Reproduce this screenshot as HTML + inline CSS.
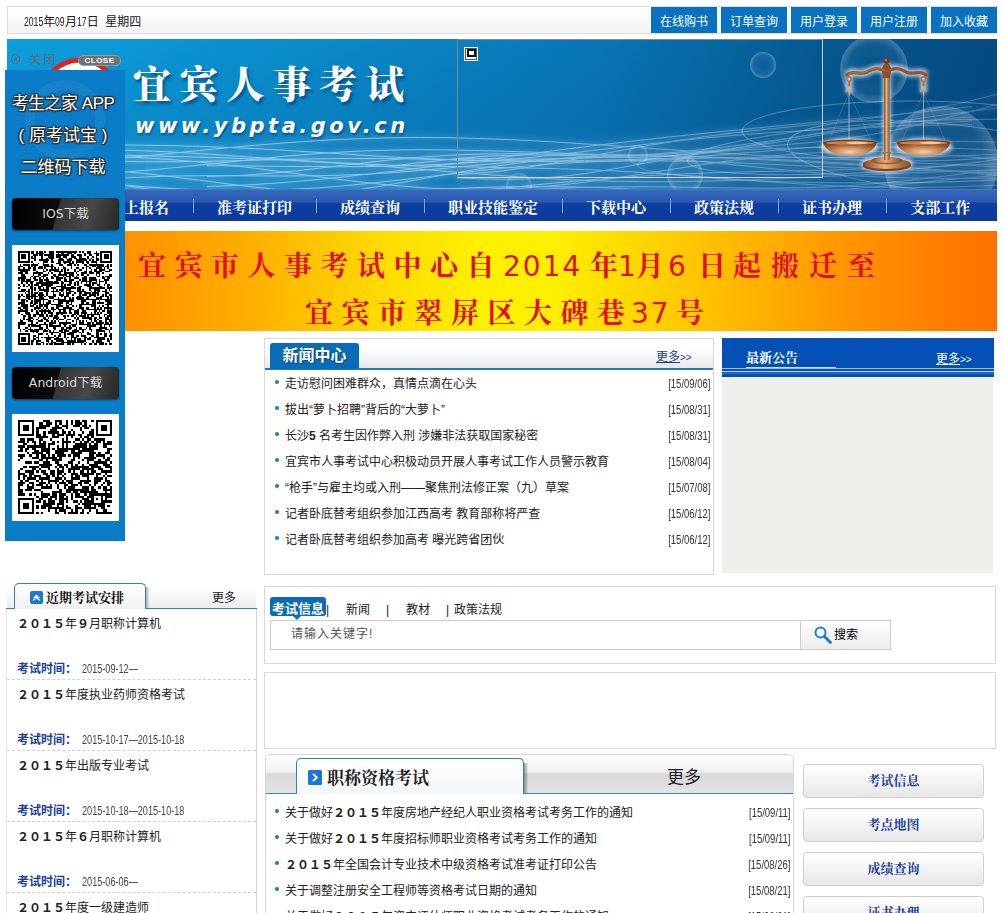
<!DOCTYPE html>
<html lang="zh-CN">
<head>
<meta charset="utf-8">
<title>宜宾人事考试</title>
<style>
*{box-sizing:border-box;margin:0;padding:0}
html,body{width:1004px;height:913px;overflow:hidden;background:#fff}
body{position:relative;font-family:"Liberation Sans","Noto Sans CJK SC",sans-serif;font-size:12px;color:#222}
.abs{position:absolute}
.serif{font-family:"Liberation Serif","Noto Serif CJK SC",serif}
.nar2{display:inline-block;transform:scaleX(.72);transform-origin:0 50%;margin-right:-3.7px}
.nar2.n4{margin-right:-7.4px}
.nar{font-family:"Liberation Sans",sans-serif;letter-spacing:-1px}
a{color:inherit;text-decoration:none}
/* top bar */
#topbar{left:7px;top:6px;width:990px;height:28px;border:1px solid #dcdcdc;background:linear-gradient(#fff,#f3f3f3)}
#date{left:24px;top:15px;font-size:12px;line-height:14px;color:#222;white-space:nowrap}
.tbtn{top:7px;width:66px;height:26px;background:#0871c0;color:#fff;font-size:12px;line-height:30px;text-align:center;white-space:nowrap;overflow:hidden}
/* banner */
#banner{left:7px;top:39px;width:990px;height:150px;overflow:hidden;background:#0878b8}
#nav{left:7px;top:189px;width:990px;height:32px;background:linear-gradient(#4a7ac8 0,#3565bb 2px,#2a58b0 40%,#0f40a0 46%,#0a3a9c 100%);white-space:nowrap;overflow:hidden}
#nav span{display:inline-block;height:32px;line-height:38px;padding:0 24px;font-size:15px;font-weight:bold;color:#fff;position:relative;vertical-align:top}
#nav span+span:before{content:"";position:absolute;left:0;top:10px;width:1px;height:14px;background:#7fa6e0}
#orange{left:7px;top:231px;width:990px;height:100px;background:linear-gradient(90deg,#ff8600 0,#ff8c00 10%,#ffb000 25%,#ffdc00 38%,#fff000 48%,#fff000 55%,#ffc400 70%,#ff9400 85%,#ff7000 100%)}
.ol{color:#e0102c;font-size:28px;letter-spacing:8.5px;white-space:nowrap;font-weight:700;margin-top:1px;line-height:36px}
.dg{font-family:"DejaVu Sans","Liberation Sans",sans-serif;font-weight:normal;letter-spacing:2px;font-size:28px}

.box{border:1px solid #d8d8d8;background:#fff}
.more{font-size:12px;line-height:14px;white-space:nowrap}
.gt{font-size:10px}
.nl{list-style:none}
.nl li{position:relative;height:26px;line-height:26px;padding-top:1px;padding-left:20px;font-size:12px;color:#222;white-space:nowrap}
.nl li i{position:absolute;left:10px;top:10px;width:4px;height:4px;border-radius:2px;background:#1a78d0}
.nl li b{position:absolute;right:3px;top:1px;font-weight:normal;color:#333;letter-spacing:0;transform:scaleX(.79);transform-origin:100% 50%}
.ex{left:7px;width:249px;height:71px;border-bottom:1px dashed #d0d0d0}
.ex p{position:absolute;left:10px;top:8px;font-size:12px;line-height:15px;color:#222;white-space:nowrap}
.ex em{position:absolute;left:10px;top:53px;font-style:normal;font-size:12px;line-height:15px;color:#333;white-space:nowrap}
.ex em b{color:#1c3f9c}
.ex em span{display:inline-block;letter-spacing:0;color:#444;margin-left:5px;transform:scaleX(.76);transform-origin:0 50%}
.stab{top:603px;font-size:12px;line-height:14px;color:#222;white-space:nowrap}
.rb{left:803px;width:181px;height:34px;border:1px solid #cfcfcf;border-radius:4px;background:linear-gradient(#fff 0,#f4f4f4 50%,#e6e6e6 100%);font-size:13px;line-height:32px;font-weight:bold;color:#1c3f9c;text-align:center}

.fl{left:3px;width:120px;text-align:center;font-size:17px;line-height:22px;color:#fff;white-space:nowrap;letter-spacing:0;text-shadow:0 0 2px #222,1px 1px 1px #222,-1px -1px 1px #333,1px -1px 1px #333,-1px 1px 1px #333}
.fbtn{left:12px;width:107px;height:32px;border-radius:4px;background:linear-gradient(105deg,#000 0,#0c0c0c 42%,#363636 43%,#484848 70%,#262626 100%);box-shadow:0 1px 2px rgba(0,0,0,.5);color:#d8d8d8;font-size:12.5px;line-height:32px;text-align:center;white-space:nowrap;font-family:'DejaVu Sans','Noto Sans CJK SC',sans-serif}
</style>
</head>
<body>
<!-- top bar -->
<div class="abs" id="topbar"></div>
<div class="abs" id="date"><span class="nar2 n4">2015</span>年<span class="nar2">09</span>月<span class="nar2">17</span>日&nbsp; 星期四</div>
<a class="abs tbtn" style="left:651px">在线购书</a>
<a class="abs tbtn" style="left:721px">订单查询</a>
<a class="abs tbtn" style="left:791px">用户登录</a>
<a class="abs tbtn" style="left:861px">用户注册</a>
<a class="abs tbtn" style="left:931px">加入收藏</a>

<!-- banner -->
<div class="abs" id="banner"><!--BANNER_START-->
<svg class="abs" style="left:0;top:0" width="990" height="150" viewBox="0 0 990 150">
<defs>
<linearGradient id="bg" x1="0" x2="1" y1="0" y2="0"><stop offset="0" stop-color="#0da0de"/><stop offset=".3" stop-color="#0a8ccc"/><stop offset=".6" stop-color="#0876b6"/><stop offset=".83" stop-color="#05588f"/><stop offset="1" stop-color="#044a82"/></linearGradient>
<linearGradient id="bgv" x1="0" x2="0" y1="0" y2="1"><stop offset="0" stop-color="#003060" stop-opacity="0"/><stop offset="1" stop-color="#0a4a90" stop-opacity=".25"/></linearGradient>
<radialGradient id="bub" cx=".5" cy=".5" r=".5"><stop offset="0" stop-color="#fff" stop-opacity="0"/><stop offset=".75" stop-color="#fff" stop-opacity=".08"/><stop offset="1" stop-color="#fff" stop-opacity=".35"/></radialGradient>
<linearGradient id="cop" x1="0" x2="1" y1="0" y2="0"><stop offset="0" stop-color="#8a4a22"/><stop offset=".45" stop-color="#e8b07a"/><stop offset="1" stop-color="#8a4a22"/></linearGradient>
<linearGradient id="pan" x1="0" x2="0" y1="0" y2="1"><stop offset="0" stop-color="#a86436"/><stop offset=".5" stop-color="#e0a874"/><stop offset="1" stop-color="#7a3e1c"/></linearGradient>
<radialGradient id="pan2" cx=".5" cy=".75" r=".6"><stop offset="0" stop-color="#f4cfa4"/><stop offset=".45" stop-color="#d09060"/><stop offset="1" stop-color="#8c4a22"/></radialGradient><filter id="glow" x="-20%" y="-20%" width="140%" height="140%"><feGaussianBlur stdDeviation="2.2"/></filter>
</defs>
<rect width="990" height="150" fill="url(#bg)"/>
<rect width="990" height="150" fill="url(#bgv)"/>
<!-- waves -->
<defs><linearGradient id="fg" x1="0" x2="1" y1="0" y2="0"><stop offset="0" stop-color="#fff"/><stop offset=".45" stop-color="#fff"/><stop offset=".8" stop-color="#999"/><stop offset="1" stop-color="#777"/></linearGradient><mask id="fade" maskUnits="userSpaceOnUse" x="0" y="0" width="990" height="150"><rect width="990" height="150" fill="url(#fg)"/></mask><filter id="wb" x="-5%" y="-50%" width="110%" height="200%"><feGaussianBlur stdDeviation="3"/></filter>
<linearGradient id="haze" x1="0" x2="0" y1="0" y2="1"><stop offset="0" stop-color="#bfe6ff" stop-opacity="0"/><stop offset=".55" stop-color="#bfe6ff" stop-opacity=".08"/><stop offset="1" stop-color="#bfe6ff" stop-opacity=".05"/></linearGradient></defs>
<rect x="0" y="88" width="990" height="62" fill="url(#haze)"/>
<g fill="none" stroke="#dff2ff" stroke-width="3" opacity=".22" filter="url(#wb)" mask="url(#fade)">
<path d="M0 151.1C9 149.9 37 146.3 55 144.4C73 142.4 92 140.7 110 139.4C128 138.2 147 137.5 165 137.0C183 136.6 202 136.7 220 136.7C238 136.7 257 137.0 275 137.0C293 136.9 312 136.9 330 136.3C348 135.8 367 134.9 385 133.7C403 132.5 422 130.7 440 129.1C458 127.5 477 125.4 495 123.9C513 122.3 532 120.7 550 119.7C568 118.8 587 118.2 605 118.2C623 118.3 642 119.0 660 120.0C678 121.1 697 122.9 715 124.6C733 126.3 752 128.4 770 130.2C788 132.0 807 133.9 825 135.2C843 136.6 862 137.6 880 138.3C898 139.0 917 139.2 935 139.3C953 139.5 981 139.2 990 139.2"/>
<path d="M0 116.5C9 117.1 37 119.3 55 120.2C73 121.2 92 122.0 110 122.4C128 122.8 147 122.9 165 122.8C183 122.7 202 122.3 220 121.9C238 121.5 257 120.9 275 120.5C293 120.1 312 119.7 330 119.6C348 119.4 367 119.5 385 119.6C403 119.8 422 120.2 440 120.6C458 121.0 477 121.6 495 121.9C513 122.3 532 122.7 550 122.7C568 122.7 587 122.6 605 122.1C623 121.6 642 120.8 660 119.7C678 118.7 697 117.3 715 115.8C733 114.4 752 112.7 770 111.2C788 109.7 807 108.1 825 106.9C843 105.6 862 104.5 880 103.8C898 103.1 917 102.7 935 102.6C953 102.4 981 102.9 990 103.0"/>
<path d="M0 135.6C9 136.4 37 138.9 55 140.5C73 142.2 92 144.0 110 145.5C128 147.0 147 148.6 165 149.6C183 150.6 202 151.3 220 151.6C238 151.8 257 151.5 275 150.8C293 150.2 312 148.9 330 147.4C348 145.9 367 143.9 385 141.9C403 139.9 422 137.5 440 135.4C458 133.3 477 131.1 495 129.3C513 127.5 532 125.8 550 124.6C568 123.5 587 122.6 605 122.2C623 121.7 642 121.7 660 121.9C678 122.1 697 122.7 715 123.3C733 123.9 752 124.8 770 125.6C788 126.4 807 127.3 825 128.1C843 128.8 862 129.6 880 130.2C898 130.9 917 131.4 935 132.0C953 132.6 981 133.5 990 133.8"/>
<path d="M0 117.8C9 117.7 37 116.9 55 116.9C73 116.9 92 117.1 110 117.7C128 118.3 147 119.3 165 120.7C183 122.1 202 123.9 220 125.9C238 127.9 257 130.4 275 132.8C293 135.1 312 137.8 330 140.1C348 142.3 367 144.6 385 146.3C403 147.9 422 149.3 440 149.9C458 150.5 477 150.6 495 150.0C513 149.4 532 148.0 550 146.2C568 144.5 587 142.0 605 139.5C623 136.9 642 133.8 660 131.1C678 128.3 697 125.3 715 122.8C733 120.4 752 118.1 770 116.5C788 114.8 807 113.6 825 113.1C843 112.5 862 112.5 880 113.0C898 113.4 917 114.5 935 115.7C953 117.0 981 119.6 990 120.4"/>
<path d="M0 112.4C9 112.1 37 111.0 55 110.8C73 110.5 92 110.6 110 111.0C128 111.3 147 112.1 165 113.0C183 114.0 202 115.2 220 116.4C238 117.6 257 119.1 275 120.3C293 121.5 312 122.7 330 123.7C348 124.6 367 125.4 385 126.1C403 126.7 422 127.1 440 127.5C458 127.9 477 128.1 495 128.5C513 128.9 532 129.2 550 129.7C568 130.3 587 130.9 605 131.8C623 132.7 642 133.9 660 135.1C678 136.3 697 137.8 715 139.2C733 140.6 752 142.1 770 143.4C788 144.6 807 145.9 825 146.7C843 147.5 862 148.1 880 148.4C898 148.6 917 148.5 935 148.1C953 147.8 981 146.6 990 146.3"/>
<path d="M0 113.2C9 113.5 37 114.4 55 114.9C73 115.4 92 115.8 110 116.2C128 116.7 147 117.0 165 117.4C183 117.9 202 118.3 220 118.9C238 119.5 257 120.2 275 121.0C293 121.9 312 122.9 330 124.1C348 125.2 367 126.6 385 128.0C403 129.4 422 130.9 440 132.4C458 133.8 477 135.4 495 136.6C513 137.9 532 139.2 550 140.1C568 141.0 587 141.8 605 142.2C623 142.6 642 142.8 660 142.7C678 142.6 697 142.2 715 141.7C733 141.2 752 140.4 770 139.7C788 138.9 807 138.0 825 137.1C843 136.3 862 135.5 880 134.7C898 134.0 917 133.3 935 132.7C953 132.0 981 131.3 990 131.0"/>
<path d="M0 105.9C9 105.9 37 105.9 55 106.0C73 106.0 92 105.9 110 106.0C128 106.1 147 106.3 165 106.7C183 107.1 202 107.6 220 108.4C238 109.1 257 110.1 275 111.1C293 112.2 312 113.4 330 114.6C348 115.7 367 117.0 385 118.0C403 119.0 422 119.9 440 120.5C458 121.2 477 121.6 495 121.8C513 122.1 532 122.0 550 121.8C568 121.7 587 121.3 605 120.9C623 120.6 642 120.1 660 119.8C678 119.4 697 119.1 715 118.9C733 118.7 752 118.6 770 118.5C788 118.5 807 118.6 825 118.5C843 118.5 862 118.5 880 118.3C898 118.1 917 117.8 935 117.3C953 116.8 981 115.6 990 115.2"/>
<path d="M0 135.5C9 135.5 37 136.1 55 135.8C73 135.5 92 134.6 110 133.5C128 132.4 147 130.7 165 128.9C183 127.2 202 125.1 220 123.2C238 121.3 257 119.2 275 117.5C293 115.9 312 114.4 330 113.3C348 112.2 367 111.5 385 111.1C403 110.7 422 110.7 440 110.9C458 111.1 477 111.7 495 112.2C513 112.7 532 113.4 550 114.0C568 114.6 587 115.3 605 115.8C623 116.3 642 116.8 660 117.3C678 117.7 697 118.1 715 118.6C733 119.2 752 119.7 770 120.5C788 121.3 807 122.2 825 123.3C843 124.4 862 125.7 880 127.0C898 128.3 917 129.9 935 131.1C953 132.3 981 133.9 990 134.5"/>
<path d="M0 126.8C9 127.0 37 127.2 55 128.0C73 128.9 92 130.1 110 131.8C128 133.4 147 135.6 165 137.7C183 139.9 202 142.6 220 144.8C238 147.0 257 149.4 275 151.1C293 152.9 312 154.4 330 155.3C348 156.2 367 156.5 385 156.5C403 156.4 422 155.7 440 155.0C458 154.3 477 153.1 495 152.1C513 151.2 532 150.1 550 149.4C568 148.6 587 148.1 605 147.9C623 147.6 642 147.8 660 147.9C678 148.1 697 148.6 715 148.8C733 149.0 752 149.3 770 149.2C788 149.0 807 148.6 825 147.7C843 146.7 862 145.3 880 143.6C898 141.9 917 139.6 935 137.4C953 135.2 981 131.5 990 130.4"/>
<path d="M0 139.9C9 140.6 37 142.5 55 144.0C73 145.6 92 147.6 110 149.3C128 151.0 147 152.9 165 154.2C183 155.6 202 156.8 220 157.5C238 158.1 257 158.3 275 158.2C293 158.0 312 157.3 330 156.5C348 155.7 367 154.4 385 153.3C403 152.2 422 150.9 440 150.0C458 149.1 477 148.2 495 147.8C513 147.5 532 147.4 550 147.6C568 147.8 587 148.5 605 149.2C623 149.8 642 150.9 660 151.6C678 152.3 697 153.1 715 153.4C733 153.7 752 153.9 770 153.5C788 153.1 807 152.3 825 151.2C843 150.1 862 148.5 880 146.8C898 145.2 917 143.1 935 141.3C953 139.6 981 137.1 990 136.2"/>
<path d="M0 127.4C9 128.8 37 132.8 55 135.8C73 138.7 92 142.2 110 145.2C128 148.1 147 151.2 165 153.4C183 155.6 202 157.4 220 158.3C238 159.1 257 159.2 275 158.4C293 157.6 312 155.9 330 153.7C348 151.5 367 148.3 385 145.2C403 142.2 422 138.5 440 135.3C458 132.2 477 128.8 495 126.2C513 123.7 532 121.4 550 119.8C568 118.2 587 117.2 605 116.7C623 116.2 642 116.4 660 116.7C678 117.0 697 117.9 715 118.7C733 119.5 752 120.5 770 121.5C788 122.5 807 123.4 825 124.5C843 125.5 862 126.4 880 127.6C898 128.7 917 129.9 935 131.3C953 132.8 981 135.4 990 136.2"/>
<path d="M0 128.7C9 128.0 37 126.1 55 124.6C73 123.1 92 121.4 110 119.7C128 117.9 147 116.0 165 114.2C183 112.4 202 110.5 220 108.8C238 107.1 257 105.4 275 104.1C293 102.7 312 101.5 330 100.6C348 99.7 367 99.1 385 98.8C403 98.4 422 98.4 440 98.7C458 99.0 477 99.5 495 100.3C513 101.0 532 102.0 550 103.1C568 104.2 587 105.5 605 106.7C623 107.9 642 109.3 660 110.5C678 111.8 697 113.0 715 114.2C733 115.3 752 116.4 770 117.4C788 118.4 807 119.3 825 120.1C843 121.0 862 121.8 880 122.6C898 123.4 917 124.2 935 125.1C953 125.9 981 127.3 990 127.7"/>
<path d="M0 159.7C9 159.7 37 159.6 55 159.6C73 159.7 92 159.7 110 159.9C128 160.1 147 160.4 165 160.7C183 161.0 202 161.4 220 161.6C238 161.9 257 162.1 275 162.1C293 162.0 312 161.9 330 161.3C348 160.7 367 159.9 385 158.8C403 157.6 422 156.1 440 154.6C458 153.0 477 151.1 495 149.3C513 147.5 532 145.5 550 143.8C568 142.1 587 140.4 605 139.1C623 137.7 642 136.6 660 135.6C678 134.7 697 134.1 715 133.5C733 132.9 752 132.6 770 132.2C788 131.8 807 131.5 825 131.0C843 130.5 862 130.0 880 129.4C898 128.7 917 127.9 935 127.1C953 126.4 981 125.1 990 124.7"/>
<path d="M380 127.5C388 126.6 410 124.0 425 122.4C440 120.7 455 118.9 470 117.8C485 116.8 500 116.1 515 115.9C530 115.7 545 116.2 560 116.5C575 116.9 590 117.7 605 117.9C620 118.1 635 118.2 650 117.5C665 116.9 680 115.6 695 113.8C710 112.0 725 109.4 740 106.9C755 104.4 770 101.2 785 98.7C800 96.2 815 93.6 830 91.7C845 89.9 860 88.6 875 87.7C890 86.7 905 86.6 920 86.3C935 86.0 958 85.8 965 85.7"/>
<path d="M200 126.6C208 126.7 230 126.9 245 127.0C260 127.2 275 127.4 290 127.5C305 127.6 320 127.7 335 127.7C350 127.7 365 127.6 380 127.3C395 127.0 410 126.5 425 125.8C440 125.2 455 124.3 470 123.2C485 122.1 500 120.8 515 119.3C530 117.9 545 116.2 560 114.5C575 112.8 590 111.0 605 109.3C620 107.5 635 105.7 650 104.0C665 102.4 680 100.8 695 99.3C710 97.9 725 96.5 740 95.4C755 94.2 770 93.2 785 92.3C800 91.3 815 90.6 830 89.8C845 89.0 860 88.3 875 87.5C890 86.7 905 85.9 920 84.9C935 84.0 958 82.2 965 81.7"/>
<path d="M450 135.8C458 135.1 480 133.7 495 131.9C510 130.1 525 127.6 540 125.1C555 122.6 570 119.7 585 116.9C600 114.2 615 111.2 630 108.6C645 105.9 660 103.3 675 101.0C690 98.7 705 96.6 720 94.7C735 92.8 750 91.3 765 89.7C780 88.1 795 86.8 810 85.2C825 83.7 840 82.3 855 80.4C870 78.6 885 76.7 900 74.3C915 71.9 930 69.2 945 66.0C960 62.9 982 57.1 990 55.3"/>
<path d="M200 147.5C208 147.2 230 146.5 245 145.7C260 144.8 275 143.7 290 142.4C305 141.1 320 139.7 335 138.1C350 136.5 365 134.8 380 133.0C395 131.3 410 129.4 425 127.5C440 125.6 455 123.6 470 121.7C485 119.7 500 117.7 515 115.8C530 113.9 545 111.9 560 110.0C575 108.2 590 106.3 605 104.5C620 102.7 635 101.0 650 99.3C665 97.7 680 96.1 695 94.5C710 92.9 725 91.4 740 90.0C755 88.5 770 87.1 785 85.6C800 84.2 815 82.8 830 81.4C845 80.0 860 78.6 875 77.1C890 75.6 905 74.1 920 72.5C935 70.9 958 68.3 965 67.5"/>
<path d="M200 137.4C208 137.1 230 136.7 245 135.7C260 134.8 275 133.2 290 131.7C305 130.1 320 128.2 335 126.4C350 124.7 365 122.8 380 121.3C395 119.7 410 118.3 425 117.3C440 116.3 455 115.6 470 115.1C485 114.7 500 114.7 515 114.8C530 114.8 545 115.2 560 115.4C575 115.6 590 116.0 605 116.0C620 116.0 635 115.9 650 115.3C665 114.8 680 113.9 695 112.6C710 111.3 725 109.5 740 107.6C755 105.6 770 103.2 785 100.8C800 98.5 815 95.8 830 93.4C845 91.1 860 88.6 875 86.6C890 84.5 905 82.7 920 81.3C935 79.8 958 78.5 965 77.9"/>
<path d="M450 138.9C458 139.1 480 140.3 495 140.3C510 140.2 525 139.8 540 138.7C555 137.6 570 135.7 585 133.5C600 131.3 615 128.3 630 125.7C645 123.0 660 120.0 675 117.6C690 115.2 705 113.0 720 111.2C735 109.4 750 108.1 765 106.8C780 105.4 795 104.5 810 102.9C825 101.3 840 99.6 855 97.2C870 94.8 885 91.7 900 88.4C915 85.1 930 81.0 945 77.2C960 73.4 982 67.6 990 65.7"/>
<path d="M450 119.0C458 119.2 480 119.8 495 120.0C510 120.2 525 120.2 540 120.0C555 119.8 570 119.4 585 118.8C600 118.2 615 117.5 630 116.4C645 115.4 660 114.1 675 112.7C690 111.2 705 109.5 720 107.7C735 105.8 750 103.8 765 101.7C780 99.5 795 97.2 810 95.0C825 92.7 840 90.3 855 88.0C870 85.7 885 83.4 900 81.2C915 79.0 930 76.8 945 74.8C960 72.8 982 70.0 990 69.1"/>
</g>
<g fill="none" stroke="#eaf6ff" stroke-width="1" opacity=".5" mask="url(#fade)">
<path d="M0 151.1C9 149.9 37 146.3 55 144.4C73 142.4 92 140.7 110 139.4C128 138.2 147 137.5 165 137.0C183 136.6 202 136.7 220 136.7C238 136.7 257 137.0 275 137.0C293 136.9 312 136.9 330 136.3C348 135.8 367 134.9 385 133.7C403 132.5 422 130.7 440 129.1C458 127.5 477 125.4 495 123.9C513 122.3 532 120.7 550 119.7C568 118.8 587 118.2 605 118.2C623 118.3 642 119.0 660 120.0C678 121.1 697 122.9 715 124.6C733 126.3 752 128.4 770 130.2C788 132.0 807 133.9 825 135.2C843 136.6 862 137.6 880 138.3C898 139.0 917 139.2 935 139.3C953 139.5 981 139.2 990 139.2"/>
<path d="M0 116.5C9 117.1 37 119.3 55 120.2C73 121.2 92 122.0 110 122.4C128 122.8 147 122.9 165 122.8C183 122.7 202 122.3 220 121.9C238 121.5 257 120.9 275 120.5C293 120.1 312 119.7 330 119.6C348 119.4 367 119.5 385 119.6C403 119.8 422 120.2 440 120.6C458 121.0 477 121.6 495 121.9C513 122.3 532 122.7 550 122.7C568 122.7 587 122.6 605 122.1C623 121.6 642 120.8 660 119.7C678 118.7 697 117.3 715 115.8C733 114.4 752 112.7 770 111.2C788 109.7 807 108.1 825 106.9C843 105.6 862 104.5 880 103.8C898 103.1 917 102.7 935 102.6C953 102.4 981 102.9 990 103.0"/>
<path d="M0 135.6C9 136.4 37 138.9 55 140.5C73 142.2 92 144.0 110 145.5C128 147.0 147 148.6 165 149.6C183 150.6 202 151.3 220 151.6C238 151.8 257 151.5 275 150.8C293 150.2 312 148.9 330 147.4C348 145.9 367 143.9 385 141.9C403 139.9 422 137.5 440 135.4C458 133.3 477 131.1 495 129.3C513 127.5 532 125.8 550 124.6C568 123.5 587 122.6 605 122.2C623 121.7 642 121.7 660 121.9C678 122.1 697 122.7 715 123.3C733 123.9 752 124.8 770 125.6C788 126.4 807 127.3 825 128.1C843 128.8 862 129.6 880 130.2C898 130.9 917 131.4 935 132.0C953 132.6 981 133.5 990 133.8"/>
<path d="M0 117.8C9 117.7 37 116.9 55 116.9C73 116.9 92 117.1 110 117.7C128 118.3 147 119.3 165 120.7C183 122.1 202 123.9 220 125.9C238 127.9 257 130.4 275 132.8C293 135.1 312 137.8 330 140.1C348 142.3 367 144.6 385 146.3C403 147.9 422 149.3 440 149.9C458 150.5 477 150.6 495 150.0C513 149.4 532 148.0 550 146.2C568 144.5 587 142.0 605 139.5C623 136.9 642 133.8 660 131.1C678 128.3 697 125.3 715 122.8C733 120.4 752 118.1 770 116.5C788 114.8 807 113.6 825 113.1C843 112.5 862 112.5 880 113.0C898 113.4 917 114.5 935 115.7C953 117.0 981 119.6 990 120.4"/>
<path d="M0 112.4C9 112.1 37 111.0 55 110.8C73 110.5 92 110.6 110 111.0C128 111.3 147 112.1 165 113.0C183 114.0 202 115.2 220 116.4C238 117.6 257 119.1 275 120.3C293 121.5 312 122.7 330 123.7C348 124.6 367 125.4 385 126.1C403 126.7 422 127.1 440 127.5C458 127.9 477 128.1 495 128.5C513 128.9 532 129.2 550 129.7C568 130.3 587 130.9 605 131.8C623 132.7 642 133.9 660 135.1C678 136.3 697 137.8 715 139.2C733 140.6 752 142.1 770 143.4C788 144.6 807 145.9 825 146.7C843 147.5 862 148.1 880 148.4C898 148.6 917 148.5 935 148.1C953 147.8 981 146.6 990 146.3"/>
<path d="M0 113.2C9 113.5 37 114.4 55 114.9C73 115.4 92 115.8 110 116.2C128 116.7 147 117.0 165 117.4C183 117.9 202 118.3 220 118.9C238 119.5 257 120.2 275 121.0C293 121.9 312 122.9 330 124.1C348 125.2 367 126.6 385 128.0C403 129.4 422 130.9 440 132.4C458 133.8 477 135.4 495 136.6C513 137.9 532 139.2 550 140.1C568 141.0 587 141.8 605 142.2C623 142.6 642 142.8 660 142.7C678 142.6 697 142.2 715 141.7C733 141.2 752 140.4 770 139.7C788 138.9 807 138.0 825 137.1C843 136.3 862 135.5 880 134.7C898 134.0 917 133.3 935 132.7C953 132.0 981 131.3 990 131.0"/>
<path d="M0 105.9C9 105.9 37 105.9 55 106.0C73 106.0 92 105.9 110 106.0C128 106.1 147 106.3 165 106.7C183 107.1 202 107.6 220 108.4C238 109.1 257 110.1 275 111.1C293 112.2 312 113.4 330 114.6C348 115.7 367 117.0 385 118.0C403 119.0 422 119.9 440 120.5C458 121.2 477 121.6 495 121.8C513 122.1 532 122.0 550 121.8C568 121.7 587 121.3 605 120.9C623 120.6 642 120.1 660 119.8C678 119.4 697 119.1 715 118.9C733 118.7 752 118.6 770 118.5C788 118.5 807 118.6 825 118.5C843 118.5 862 118.5 880 118.3C898 118.1 917 117.8 935 117.3C953 116.8 981 115.6 990 115.2"/>
<path d="M0 135.5C9 135.5 37 136.1 55 135.8C73 135.5 92 134.6 110 133.5C128 132.4 147 130.7 165 128.9C183 127.2 202 125.1 220 123.2C238 121.3 257 119.2 275 117.5C293 115.9 312 114.4 330 113.3C348 112.2 367 111.5 385 111.1C403 110.7 422 110.7 440 110.9C458 111.1 477 111.7 495 112.2C513 112.7 532 113.4 550 114.0C568 114.6 587 115.3 605 115.8C623 116.3 642 116.8 660 117.3C678 117.7 697 118.1 715 118.6C733 119.2 752 119.7 770 120.5C788 121.3 807 122.2 825 123.3C843 124.4 862 125.7 880 127.0C898 128.3 917 129.9 935 131.1C953 132.3 981 133.9 990 134.5"/>
<path d="M0 126.8C9 127.0 37 127.2 55 128.0C73 128.9 92 130.1 110 131.8C128 133.4 147 135.6 165 137.7C183 139.9 202 142.6 220 144.8C238 147.0 257 149.4 275 151.1C293 152.9 312 154.4 330 155.3C348 156.2 367 156.5 385 156.5C403 156.4 422 155.7 440 155.0C458 154.3 477 153.1 495 152.1C513 151.2 532 150.1 550 149.4C568 148.6 587 148.1 605 147.9C623 147.6 642 147.8 660 147.9C678 148.1 697 148.6 715 148.8C733 149.0 752 149.3 770 149.2C788 149.0 807 148.6 825 147.7C843 146.7 862 145.3 880 143.6C898 141.9 917 139.6 935 137.4C953 135.2 981 131.5 990 130.4"/>
<path d="M0 139.9C9 140.6 37 142.5 55 144.0C73 145.6 92 147.6 110 149.3C128 151.0 147 152.9 165 154.2C183 155.6 202 156.8 220 157.5C238 158.1 257 158.3 275 158.2C293 158.0 312 157.3 330 156.5C348 155.7 367 154.4 385 153.3C403 152.2 422 150.9 440 150.0C458 149.1 477 148.2 495 147.8C513 147.5 532 147.4 550 147.6C568 147.8 587 148.5 605 149.2C623 149.8 642 150.9 660 151.6C678 152.3 697 153.1 715 153.4C733 153.7 752 153.9 770 153.5C788 153.1 807 152.3 825 151.2C843 150.1 862 148.5 880 146.8C898 145.2 917 143.1 935 141.3C953 139.6 981 137.1 990 136.2"/>
<path d="M0 127.4C9 128.8 37 132.8 55 135.8C73 138.7 92 142.2 110 145.2C128 148.1 147 151.2 165 153.4C183 155.6 202 157.4 220 158.3C238 159.1 257 159.2 275 158.4C293 157.6 312 155.9 330 153.7C348 151.5 367 148.3 385 145.2C403 142.2 422 138.5 440 135.3C458 132.2 477 128.8 495 126.2C513 123.7 532 121.4 550 119.8C568 118.2 587 117.2 605 116.7C623 116.2 642 116.4 660 116.7C678 117.0 697 117.9 715 118.7C733 119.5 752 120.5 770 121.5C788 122.5 807 123.4 825 124.5C843 125.5 862 126.4 880 127.6C898 128.7 917 129.9 935 131.3C953 132.8 981 135.4 990 136.2"/>
<path d="M0 128.7C9 128.0 37 126.1 55 124.6C73 123.1 92 121.4 110 119.7C128 117.9 147 116.0 165 114.2C183 112.4 202 110.5 220 108.8C238 107.1 257 105.4 275 104.1C293 102.7 312 101.5 330 100.6C348 99.7 367 99.1 385 98.8C403 98.4 422 98.4 440 98.7C458 99.0 477 99.5 495 100.3C513 101.0 532 102.0 550 103.1C568 104.2 587 105.5 605 106.7C623 107.9 642 109.3 660 110.5C678 111.8 697 113.0 715 114.2C733 115.3 752 116.4 770 117.4C788 118.4 807 119.3 825 120.1C843 121.0 862 121.8 880 122.6C898 123.4 917 124.2 935 125.1C953 125.9 981 127.3 990 127.7"/>
<path d="M0 159.7C9 159.7 37 159.6 55 159.6C73 159.7 92 159.7 110 159.9C128 160.1 147 160.4 165 160.7C183 161.0 202 161.4 220 161.6C238 161.9 257 162.1 275 162.1C293 162.0 312 161.9 330 161.3C348 160.7 367 159.9 385 158.8C403 157.6 422 156.1 440 154.6C458 153.0 477 151.1 495 149.3C513 147.5 532 145.5 550 143.8C568 142.1 587 140.4 605 139.1C623 137.7 642 136.6 660 135.6C678 134.7 697 134.1 715 133.5C733 132.9 752 132.6 770 132.2C788 131.8 807 131.5 825 131.0C843 130.5 862 130.0 880 129.4C898 128.7 917 127.9 935 127.1C953 126.4 981 125.1 990 124.7"/>
<path d="M380 127.5C388 126.6 410 124.0 425 122.4C440 120.7 455 118.9 470 117.8C485 116.8 500 116.1 515 115.9C530 115.7 545 116.2 560 116.5C575 116.9 590 117.7 605 117.9C620 118.1 635 118.2 650 117.5C665 116.9 680 115.6 695 113.8C710 112.0 725 109.4 740 106.9C755 104.4 770 101.2 785 98.7C800 96.2 815 93.6 830 91.7C845 89.9 860 88.6 875 87.7C890 86.7 905 86.6 920 86.3C935 86.0 958 85.8 965 85.7"/>
<path d="M200 126.6C208 126.7 230 126.9 245 127.0C260 127.2 275 127.4 290 127.5C305 127.6 320 127.7 335 127.7C350 127.7 365 127.6 380 127.3C395 127.0 410 126.5 425 125.8C440 125.2 455 124.3 470 123.2C485 122.1 500 120.8 515 119.3C530 117.9 545 116.2 560 114.5C575 112.8 590 111.0 605 109.3C620 107.5 635 105.7 650 104.0C665 102.4 680 100.8 695 99.3C710 97.9 725 96.5 740 95.4C755 94.2 770 93.2 785 92.3C800 91.3 815 90.6 830 89.8C845 89.0 860 88.3 875 87.5C890 86.7 905 85.9 920 84.9C935 84.0 958 82.2 965 81.7"/>
<path d="M450 135.8C458 135.1 480 133.7 495 131.9C510 130.1 525 127.6 540 125.1C555 122.6 570 119.7 585 116.9C600 114.2 615 111.2 630 108.6C645 105.9 660 103.3 675 101.0C690 98.7 705 96.6 720 94.7C735 92.8 750 91.3 765 89.7C780 88.1 795 86.8 810 85.2C825 83.7 840 82.3 855 80.4C870 78.6 885 76.7 900 74.3C915 71.9 930 69.2 945 66.0C960 62.9 982 57.1 990 55.3"/>
<path d="M200 147.5C208 147.2 230 146.5 245 145.7C260 144.8 275 143.7 290 142.4C305 141.1 320 139.7 335 138.1C350 136.5 365 134.8 380 133.0C395 131.3 410 129.4 425 127.5C440 125.6 455 123.6 470 121.7C485 119.7 500 117.7 515 115.8C530 113.9 545 111.9 560 110.0C575 108.2 590 106.3 605 104.5C620 102.7 635 101.0 650 99.3C665 97.7 680 96.1 695 94.5C710 92.9 725 91.4 740 90.0C755 88.5 770 87.1 785 85.6C800 84.2 815 82.8 830 81.4C845 80.0 860 78.6 875 77.1C890 75.6 905 74.1 920 72.5C935 70.9 958 68.3 965 67.5"/>
<path d="M200 137.4C208 137.1 230 136.7 245 135.7C260 134.8 275 133.2 290 131.7C305 130.1 320 128.2 335 126.4C350 124.7 365 122.8 380 121.3C395 119.7 410 118.3 425 117.3C440 116.3 455 115.6 470 115.1C485 114.7 500 114.7 515 114.8C530 114.8 545 115.2 560 115.4C575 115.6 590 116.0 605 116.0C620 116.0 635 115.9 650 115.3C665 114.8 680 113.9 695 112.6C710 111.3 725 109.5 740 107.6C755 105.6 770 103.2 785 100.8C800 98.5 815 95.8 830 93.4C845 91.1 860 88.6 875 86.6C890 84.5 905 82.7 920 81.3C935 79.8 958 78.5 965 77.9"/>
<path d="M450 138.9C458 139.1 480 140.3 495 140.3C510 140.2 525 139.8 540 138.7C555 137.6 570 135.7 585 133.5C600 131.3 615 128.3 630 125.7C645 123.0 660 120.0 675 117.6C690 115.2 705 113.0 720 111.2C735 109.4 750 108.1 765 106.8C780 105.4 795 104.5 810 102.9C825 101.3 840 99.6 855 97.2C870 94.8 885 91.7 900 88.4C915 85.1 930 81.0 945 77.2C960 73.4 982 67.6 990 65.7"/>
<path d="M450 119.0C458 119.2 480 119.8 495 120.0C510 120.2 525 120.2 540 120.0C555 119.8 570 119.4 585 118.8C600 118.2 615 117.5 630 116.4C645 115.4 660 114.1 675 112.7C690 111.2 705 109.5 720 107.7C735 105.8 750 103.8 765 101.7C780 99.5 795 97.2 810 95.0C825 92.7 840 90.3 855 88.0C870 85.7 885 83.4 900 81.2C915 79.0 930 76.8 945 74.8C960 72.8 982 70.0 990 69.1"/>
</g>
<!-- bubbles -->
<circle cx="756" cy="26" r="13" fill="url(#bub)" opacity=".8"/>
<circle cx="631" cy="116" r="10" fill="url(#bub)" opacity=".7"/>
<circle cx="678" cy="136" r="18" fill="url(#bub)" opacity=".7"/>
<circle cx="512" cy="147" r="13" fill="url(#bub)" opacity=".6"/>
<circle cx="867" cy="30" r="34" fill="url(#bub)" opacity=".65"/>
<circle cx="934" cy="124" r="57" fill="url(#bub)" opacity=".6"/>
<g fill="none" stroke="#d8ecff" stroke-width="1" opacity=".32"><ellipse cx="905" cy="92" rx="170" ry="30"/><ellipse cx="880" cy="108" rx="200" ry="24" transform="rotate(-4 880 108)"/><ellipse cx="930" cy="118" rx="150" ry="34" transform="rotate(5 930 118)"/><ellipse cx="860" cy="126" rx="230" ry="18"/></g>
<!-- flash box -->
<path d="M450.500 138.500V0.500H815.500" fill="none" stroke="#7f8890"/>
<path d="M450.500 138.500H815.500V0.500" fill="none" stroke="#d6cdbf"/>
<rect x="457" y="8" width="14" height="14" fill="#fff"/>
<rect x="458.500" y="9.500" width="11" height="11" fill="none" stroke="#555" stroke-width="1"/>
<rect x="461" y="11" width="7" height="6" fill="#fff" stroke="#111" stroke-width="2"/>
<!-- scales -->
<g>
<g filter="url(#glow)" fill="#fff" stroke="#fff" opacity=".8">
<rect x="876" y="24" width="7.500" height="96" stroke="none"/>
<ellipse cx="879.800" cy="125" rx="26" ry="8.500" stroke="none"/>
<ellipse cx="843" cy="108" rx="29" ry="9" stroke="none"/>
<ellipse cx="916.500" cy="108" rx="29" ry="9" stroke="none"/>
<path d="M840 36C846 30 852 37 860 33S872 28 879.500 33C887 28 892 29 899 33S913 30 919 36" fill="none" stroke-width="7"/>
<path d="M842 36v18M916.500 36v18" fill="none" stroke-width="6"/>
</g>
<!-- strings -->
<path d="M842 52V104M916.500 52V104" stroke="#f4e4d4" stroke-width=".7" opacity=".8"/>
<path d="M842 54L822 101M842 54L864 101M916.500 54L895 101M916.500 54L938 101" stroke="#e8d8c8" stroke-width=".5" opacity=".3"/>
<!-- pole -->
<rect x="877" y="38" width="5.500" height="82" fill="url(#cop)"/>
<rect x="875.500" y="113" width="8.500" height="2" rx="1" fill="#b06a3a"/>
<circle cx="879.500" cy="21.800" r="3.100" fill="#7a3a18"/>
<circle cx="878.800" cy="21" r="1.200" fill="#b87848"/>
<path d="M877 25h5l2.500 5-1.500 9h-7l-1.500-9Z" fill="#8e4c26"/>
<!-- beam -->
<path d="M840 36C846 30 852 37 860 33S872 28 879.500 33C887 28 892 29 899 33S913 30 919 36" fill="none" stroke="#9a5228" stroke-width="3.200" stroke-linecap="round"/>
<path d="M841 35.500C846 31 852 36.500 860 32.500S872 28 879.500 32" fill="none" stroke="#c88858" stroke-width=".8" opacity=".8"/>
<!-- hooks -->
<g fill="none" stroke="#b87040" stroke-width="1.400">
<circle cx="842" cy="40" r="2.200"/><circle cx="916.500" cy="40" r="2.200"/>
<path d="M842 42v5M916.500 42v5" stroke-width="2.400"/>
<path d="M840.500 47l-1.500 6M843.500 47l1.500 6M842 47v6M915 47l-1.500 6M918 47l1.500 6M916.500 47v6" stroke-width="1" stroke="#d8a070"/>
</g>
<!-- pans -->
<path d="M816 103.500Q843 100 870 103.500Q866 116.500 843 116.500T816 103.500Z" fill="url(#pan2)"/>
<ellipse cx="843" cy="103.500" rx="27" ry="2.800" fill="#7a3c18"/>
<ellipse cx="843" cy="104" rx="24" ry="1.800" fill="#c88450"/>
<ellipse cx="850" cy="103.800" rx="11" ry="1.200" fill="#f0c8a0"/>
<path d="M889.500 103.500Q916.500 100 943.500 103.500Q939.500 116.500 916.500 116.500T889.500 103.500Z" fill="url(#pan2)"/>
<ellipse cx="916.500" cy="103.500" rx="27" ry="2.800" fill="#7a3c18"/>
<ellipse cx="916.500" cy="104" rx="24" ry="1.800" fill="#c88450"/>
<ellipse cx="923.500" cy="103.800" rx="11" ry="1.200" fill="#f0c8a0"/>
<!-- base -->
<ellipse cx="879.800" cy="126.500" rx="24.200" ry="5.800" fill="#7e4220"/>
<ellipse cx="879.800" cy="124.800" rx="24" ry="5.200" fill="url(#cop)"/>
<ellipse cx="879.800" cy="121.800" rx="16" ry="3.400" fill="#9a5a30"/>
<ellipse cx="879.800" cy="120.800" rx="15" ry="3" fill="url(#cop)"/>
<rect x="877" y="114" width="5.500" height="7" fill="url(#cop)"/>
</g>
</svg>
<div class="abs serif" style="left:126px;top:22px;font-size:38px;line-height:48px;font-weight:900;color:#fff;letter-spacing:8.600px;white-space:nowrap;text-shadow:2px 3px 3px rgba(0,40,90,.55)">宜宾人事考试</div>
<div class="abs" style="left:128px;top:72px;font-size:21px;line-height:30px;font-weight:bold;font-style:italic;color:#fff;letter-spacing:3.500px;white-space:nowrap;text-shadow:1px 2px 2px rgba(0,40,90,.5);font-family:'DejaVu Sans','Liberation Sans',sans-serif">www.ybpta.gov.cn</div>

<!--BANNER_END--></div>
<div class="abs serif" id="nav"><span>首页</span><span>网上报名</span><span>准考证打印</span><span>成绩查询</span><span>职业技能鉴定</span><span>下载中心</span><span>政策法规</span><span>证书办理</span><span>支部工作</span></div>

<!-- orange notice -->
<div class="abs" id="orange"></div>
<div class="abs ol serif" style="left:138px;top:248px">宜宾市人事考试中心自</div>
<div class="abs ol dg" style="left:503px;top:248px">2014</div>
<div class="abs ol serif" style="left:590px;top:248px">年</div>
<div class="abs ol dg" style="left:618px;top:248px">1</div>
<div class="abs ol serif" style="left:636px;top:248px">月</div>
<div class="abs ol dg" style="left:668px;top:248px">6</div>
<div class="abs ol serif" style="left:698px;top:248px">日</div>
<div class="abs ol serif" style="left:733px;top:248px;letter-spacing:10px">起搬迁至</div>
<div class="abs ol serif" style="left:305px;top:295px">宜宾市翠屏区大碑巷</div>
<div class="abs ol dg" style="left:631px;top:295px">37</div>
<div class="abs ol serif" style="left:676px;top:295px">号</div>

<!-- news center -->
<div class="abs box" style="left:264px;top:338px;width:450px;height:237px"></div>
<div class="abs" style="left:265px;top:339px;width:448px;height:29px;background:linear-gradient(#fff 30%,#e9e9e9)"></div>
<div class="abs" style="left:265px;top:368px;width:448px;height:2px;background:#1a7acc"></div>
<div class="abs" style="left:270px;top:343px;width:89px;height:26px;background:#0a6cb8;border-radius:3px 3px 0 0;color:#fff;font-size:16px;font-weight:bold;line-height:26px;text-align:center;text-shadow:1px 1px 1px rgba(0,0,0,.35)">新闻中心</div>
<a class="abs more" style="left:656px;top:350px;color:#1c3f94"><u>更多</u><span class="gt">&gt;&gt;</span></a>
<ul class="abs nl" style="left:265px;top:370px;width:448px">
<li><i></i>走访慰问困难群众，真情点滴在心头<b class="nar">[15/09/06]</b></li>
<li><i></i>拔出“萝卜招聘”背后的“大萝卜”<b class="nar">[15/08/31]</b></li>
<li><i></i>长沙<strong>5</strong> 名考生因作弊入刑 涉嫌非法获取国家秘密<b class="nar">[15/08/31]</b></li>
<li><i></i>宜宾市人事考试中心积极动员开展人事考试工作人员警示教育<b class="nar">[15/08/04]</b></li>
<li><i></i>“枪手”与雇主均或入刑——聚焦刑法修正案（九）草案<b class="nar">[15/07/08]</b></li>
<li><i></i>记者卧底替考组织参加江西高考 教育部称将严查<b class="nar">[15/06/12]</b></li>
<li><i></i>记者卧底替考组织参加高考 曝光跨省团伙<b class="nar">[15/06/12]</b></li>
</ul>
<!-- latest notice -->
<div class="abs" style="left:722px;top:338px;width:272px;height:39px;background:#0450b4"></div>
<div class="abs" style="left:722px;top:367px;width:272px;height:7px;background:linear-gradient(#0450b4 0,#0450b4 1px,#9cc0ee 1px,#9cc0ee 2px,#0450b4 2px,#0450b4 4px,#c4daf4 4px,#c4daf4 5px,#0450b4 5px,#3a78cc 7px)"></div>
<div class="abs" style="left:722px;top:377px;width:271px;height:196px;background:#efefeb"></div>
<div class="abs serif" style="left:746px;top:350px;font-size:13px;line-height:16px;font-weight:bold;color:#fff;white-space:nowrap">最新公告</div>
<div class="abs" style="left:746px;top:367px;width:90px;height:1px;background:#cfe0f6"></div>
<a class="abs more" style="left:936px;top:352px;color:#fff"><u>更多</u><span class="gt">&gt;&gt;</span></a>

<!-- left: recent exams -->
<div class="abs" style="left:7px;top:587px;width:249px;height:21px;background:linear-gradient(#fff,#ececec)"></div>
<div class="abs" style="left:6px;top:608px;width:251px;height:1px;background:#2a82d2"></div>
<div class="abs" style="left:256px;top:609px;width:1px;height:310px;background:#d4d4d4"></div>
<div class="abs" style="left:6px;top:609px;width:1px;height:310px;background:#e6e6e6"></div>
<div class="abs" style="left:14px;top:583px;width:132px;height:26px;border:1px solid #2a82d2;border-bottom:0;border-radius:5px 5px 0 0;background:linear-gradient(#fff,#f2f2f2)"></div>
<div class="abs" style="left:146px;top:587px;width:3px;height:21px;background:linear-gradient(90deg,rgba(0,0,0,.3),rgba(0,0,0,.06))"></div>
<div class="abs" style="left:15px;top:608px;width:130px;height:1px;background:#f2f2f2"></div>
<svg class="abs" style="left:30px;top:591px" width="13" height="13" viewBox="0 0 13 13"><rect width="13" height="13" rx="2" fill="#1a78d0"/><path d="M3 7L6.500 3.500L10 7Z" fill="#fff"/><path d="M3 9.500L6.500 6.500L10 9.500" fill="none" stroke="#fff" stroke-width="1.300"/></svg>
<div class="abs serif" style="left:46px;top:590px;font-size:13px;line-height:16px;font-weight:bold;color:#111;white-space:nowrap">近期考试安排</div>
<a class="abs" style="left:212px;top:591px;font-size:12px;line-height:14px;color:#222">更多</a>
<div class="abs ex" style="top:609px"><p><strong>２０１５</strong>年<strong>９</strong>月职称计算机</p><em><b>考试时间：</b><span class="nar">2015-09-12—</span></em></div>
<div class="abs ex" style="top:680px"><p><strong>２０１５</strong>年度执业药师资格考试</p><em><b>考试时间：</b><span class="nar">2015-10-17—2015-10-18</span></em></div>
<div class="abs ex" style="top:751px"><p><strong>２０１５</strong>年出版专业考试</p><em><b>考试时间：</b><span class="nar">2015-10-18—2015-10-18</span></em></div>
<div class="abs ex" style="top:822px"><p><strong>２０１５</strong>年<strong>６</strong>月职称计算机</p><em><b>考试时间：</b><span class="nar">2015-06-06—</span></em></div>
<div class="abs ex" style="top:893px"><p><strong>２０１５</strong>年度一级建造师</p></div>

<!-- search -->
<div class="abs box" style="left:264px;top:586px;width:732px;height:78px"></div>
<div class="abs" style="left:270px;top:597px;width:56px;height:19px;background:#0a6cb8;border-radius:3px"></div>
<div class="abs" style="left:292px;top:615px;width:0;height:0;border:5px solid transparent;border-top-color:#0a6cb8;border-bottom:0"></div>
<div class="abs" style="left:272px;top:601px;font-size:13px;line-height:16px;font-weight:bold;color:#fff;white-space:nowrap">考试信息</div>
<div class="abs stab" style="left:326px">|</div>
<div class="abs stab" style="left:346px">新闻</div>
<div class="abs stab" style="left:386px">|</div>
<div class="abs stab" style="left:406px">教材</div>
<div class="abs stab" style="left:446px">|</div>
<div class="abs stab" style="left:454px">政策法规</div>
<div class="abs" style="left:270px;top:620px;width:531px;height:30px;border:1px solid #ccc;background:#fff"></div>
<div class="abs" style="left:291px;top:627px;font-size:12px;line-height:15px;color:#555;letter-spacing:1px;white-space:nowrap">请输入关键字!</div>
<div class="abs" style="left:800px;top:620px;width:91px;height:30px;border:1px solid #ccc;background:linear-gradient(#fff,#ececec)"></div>
<svg class="abs" style="left:813px;top:625px" width="20" height="20" viewBox="0 0 20 20"><circle cx="7.500" cy="7.500" r="5" fill="#fbfdff" stroke="#1a7fd0" stroke-width="2"/><path d="M11.500 11.500L17.500 17.500" stroke="#1a78cc" stroke-width="2.800" stroke-linecap="round"/></svg>
<div class="abs" style="left:834px;top:628px;font-size:12px;line-height:15px;color:#000;white-space:nowrap">搜索</div>

<!-- empty box -->
<div class="abs box" style="left:264px;top:672px;width:732px;height:77px"></div>

<!-- bottom list -->
<div class="abs" style="left:265px;top:754px;width:529px;height:170px;border:1px solid #d8d8d8;border-radius:5px 5px 0 0;background:#fff"></div>
<div class="abs" style="left:266px;top:755px;width:527px;height:38px;border-radius:4px 4px 0 0;background:linear-gradient(#fff 0,#f0f0f0 45%,#d8d8d8 50%,#e4e4e4 100%)"></div>
<div class="abs" style="left:266px;top:793px;width:527px;height:1px;background:#2a82d2"></div>
<div class="abs" style="left:296px;top:758px;width:228px;height:36px;border:1px solid #2a82d2;border-bottom:0;border-radius:5px 5px 0 0;background:linear-gradient(#fff,#f4f6f8)"></div>
<div class="abs" style="left:524px;top:763px;width:4px;height:30px;background:linear-gradient(90deg,rgba(0,0,0,.4),rgba(0,0,0,.04))"></div>
<div class="abs" style="left:297px;top:793px;width:226px;height:1px;background:#f4f6f8"></div>
<svg class="abs" style="left:308px;top:770px" width="14" height="15" viewBox="0 0 14 15"><rect width="14" height="15" rx="1.500" fill="#1a78d0"/><path d="M5 4L9 7.500L5 11" fill="none" stroke="#fff" stroke-width="1.800"/></svg>
<div class="abs serif" style="left:327px;top:768px;font-size:17px;line-height:22px;font-weight:bold;color:#222;white-space:nowrap">职称资格考试</div>
<a class="abs" style="left:667px;top:767px;font-size:17px;line-height:22px;color:#222;white-space:nowrap">更多</a>
<ul class="abs nl" style="left:265px;top:799px;width:528px">
<li><i></i>关于做好<strong>２０１５</strong>年度房地产经纪人职业资格考试考务工作的通知<b class="nar">[15/09/11]</b></li>
<li><i></i>关于做好<strong>２０１５</strong>年度招标师职业资格考试考务工作的通知<b class="nar">[15/09/11]</b></li>
<li><i></i><strong>２０１５</strong>年全国会计专业技术中级资格考试准考证打印公告<b class="nar">[15/08/26]</b></li>
<li><i></i>关于调整注册安全工程师等资格考试日期的通知<b class="nar">[15/08/21]</b></li>
<li><i></i>关于做好<strong>２０１５</strong>年资产评估师职业资格考试考务工作的通知<b class="nar">[15/08/21]</b></li>
</ul>
<!-- right buttons -->
<a class="abs rb serif" style="top:764px">考试信息</a>
<a class="abs rb serif" style="top:808px">考点地图</a>
<a class="abs rb serif" style="top:852px">成绩查询</a>
<a class="abs rb serif" style="top:896px">证书办理</a>

<!-- floating app panel -->
<div class="abs" style="left:10px;top:53px;font-size:12px;line-height:15px;color:rgba(120,90,80,.75);white-space:nowrap;letter-spacing:2px">⊗ 关闭</div>
<svg class="abs" style="left:42px;top:56px" width="76" height="16" viewBox="0 0 76 16"><circle cx="38" cy="42" r="38" fill="#fff" stroke="#e0241c" stroke-width="5"/></svg>
<div class="abs" style="left:78px;top:55px;width:43px;height:11px;border-radius:5px;background:#6f7376;border:1px solid #9a9da0;color:#fff;font-size:8px;line-height:9px;text-align:center;letter-spacing:.5px;font-weight:bold">CLOSE</div>
<div class="abs" style="left:5px;top:70px;width:120px;height:471px;background:#0a7cc8"></div>
<div class="abs" style="left:25px;top:80px;width:80px;height:80px;border-radius:40px;border:10px solid rgba(255,255,255,.05)"></div>
<div class="abs fl" style="top:93px;letter-spacing:-.5px">考生之家 APP</div>
<div class="abs fl" style="top:125px">( 原考试宝 )</div>
<div class="abs fl" style="top:157px">二维码下载</div>
<div class="abs fbtn" style="top:198px">IOS下载</div>
<div class="abs" style="left:12px;top:245px;width:107px;height:107px;background:#fff"></div>
<svg class="abs" style="left:18px;top:251px" width="94" height="94" viewBox="0 0 57 57" shape-rendering="crispEdges"><path fill="#000" d="M0 0h7v1h-7zM8 0h2v1h-2zM11 0h1v1h-1zM13 0h2v1h-2zM16 0h1v1h-1zM19 0h3v1h-3zM23 0h13v1h-13zM37 0h1v1h-1zM39 0h1v1h-1zM42 0h2v1h-2zM47 0h1v1h-1zM50 0h7v1h-7zM0 1h1v1h-1zM6 1h1v1h-1zM8 1h2v1h-2zM11 1h5v1h-5zM19 1h3v1h-3zM24 1h1v1h-1zM26 1h2v1h-2zM30 1h3v1h-3zM34 1h1v1h-1zM40 1h1v1h-1zM42 1h2v1h-2zM46 1h3v1h-3zM50 1h1v1h-1zM56 1h1v1h-1zM0 2h1v1h-1zM2 2h3v1h-3zM6 2h1v1h-1zM9 2h3v1h-3zM13 2h2v1h-2zM16 2h6v1h-6zM23 2h8v1h-8zM32 2h2v1h-2zM36 2h3v1h-3zM40 2h1v1h-1zM43 2h2v1h-2zM47 2h2v1h-2zM50 2h1v1h-1zM52 2h3v1h-3zM56 2h1v1h-1zM0 3h1v1h-1zM2 3h3v1h-3zM6 3h1v1h-1zM8 3h1v1h-1zM10 3h1v1h-1zM14 3h1v1h-1zM18 3h4v1h-4zM23 3h3v1h-3zM27 3h3v1h-3zM32 3h3v1h-3zM37 3h2v1h-2zM42 3h1v1h-1zM45 3h1v1h-1zM47 3h1v1h-1zM50 3h1v1h-1zM52 3h3v1h-3zM56 3h1v1h-1zM0 4h1v1h-1zM2 4h3v1h-3zM6 4h1v1h-1zM8 4h3v1h-3zM14 4h1v1h-1zM17 4h1v1h-1zM19 4h3v1h-3zM25 4h2v1h-2zM29 4h1v1h-1zM31 4h2v1h-2zM34 4h2v1h-2zM37 4h4v1h-4zM42 4h1v1h-1zM44 4h1v1h-1zM47 4h2v1h-2zM50 4h1v1h-1zM52 4h3v1h-3zM56 4h1v1h-1zM0 5h1v1h-1zM6 5h1v1h-1zM10 5h1v1h-1zM13 5h6v1h-6zM20 5h1v1h-1zM24 5h4v1h-4zM30 5h3v1h-3zM35 5h7v1h-7zM43 5h1v1h-1zM45 5h1v1h-1zM47 5h2v1h-2zM50 5h1v1h-1zM56 5h1v1h-1zM0 6h7v1h-7zM8 6h1v1h-1zM15 6h3v1h-3zM20 6h2v1h-2zM24 6h2v1h-2zM27 6h5v1h-5zM33 6h1v1h-1zM35 6h5v1h-5zM41 6h2v1h-2zM44 6h4v1h-4zM50 6h7v1h-7zM9 7h1v1h-1zM12 7h1v1h-1zM15 7h1v1h-1zM23 7h3v1h-3zM28 7h1v1h-1zM31 7h3v1h-3zM35 7h1v1h-1zM39 7h1v1h-1zM42 7h1v1h-1zM47 7h1v1h-1zM1 8h1v1h-1zM3 8h4v1h-4zM8 8h4v1h-4zM15 8h4v1h-4zM20 8h1v1h-1zM25 8h2v1h-2zM30 8h3v1h-3zM34 8h1v1h-1zM36 8h1v1h-1zM40 8h2v1h-2zM43 8h9v1h-9zM54 8h1v1h-1zM56 8h1v1h-1zM0 9h3v1h-3zM6 9h1v1h-1zM8 9h1v1h-1zM10 9h1v1h-1zM13 9h2v1h-2zM16 9h6v1h-6zM27 9h1v1h-1zM32 9h1v1h-1zM41 9h2v1h-2zM45 9h2v1h-2zM48 9h4v1h-4zM53 9h2v1h-2zM56 9h1v1h-1zM0 10h1v1h-1zM3 10h1v1h-1zM6 10h2v1h-2zM9 10h2v1h-2zM12 10h3v1h-3zM16 10h1v1h-1zM20 10h1v1h-1zM22 10h1v1h-1zM24 10h1v1h-1zM27 10h2v1h-2zM32 10h1v1h-1zM35 10h2v1h-2zM39 10h1v1h-1zM41 10h1v1h-1zM43 10h1v1h-1zM47 10h4v1h-4zM52 10h1v1h-1zM54 10h1v1h-1zM0 11h7v1h-7zM9 11h2v1h-2zM15 11h1v1h-1zM17 11h1v1h-1zM19 11h6v1h-6zM26 11h1v1h-1zM28 11h1v1h-1zM30 11h1v1h-1zM34 11h1v1h-1zM37 11h2v1h-2zM41 11h1v1h-1zM44 11h1v1h-1zM46 11h2v1h-2zM49 11h4v1h-4zM55 11h2v1h-2zM1 12h5v1h-5zM11 12h1v1h-1zM15 12h2v1h-2zM19 12h1v1h-1zM22 12h5v1h-5zM28 12h1v1h-1zM34 12h1v1h-1zM36 12h1v1h-1zM40 12h2v1h-2zM43 12h2v1h-2zM46 12h5v1h-5zM53 12h3v1h-3zM0 13h3v1h-3zM4 13h2v1h-2zM9 13h6v1h-6zM18 13h1v1h-1zM20 13h1v1h-1zM25 13h1v1h-1zM28 13h6v1h-6zM35 13h1v1h-1zM38 13h4v1h-4zM43 13h3v1h-3zM47 13h3v1h-3zM51 13h1v1h-1zM2 14h2v1h-2zM9 14h1v1h-1zM12 14h2v1h-2zM15 14h3v1h-3zM21 14h2v1h-2zM24 14h6v1h-6zM31 14h3v1h-3zM36 14h1v1h-1zM38 14h2v1h-2zM42 14h1v1h-1zM47 14h1v1h-1zM49 14h1v1h-1zM55 14h2v1h-2zM2 15h3v1h-3zM8 15h1v1h-1zM10 15h3v1h-3zM14 15h3v1h-3zM20 15h1v1h-1zM22 15h3v1h-3zM27 15h1v1h-1zM29 15h3v1h-3zM33 15h1v1h-1zM35 15h1v1h-1zM40 15h2v1h-2zM48 15h2v1h-2zM51 15h1v1h-1zM53 15h4v1h-4zM0 16h5v1h-5zM7 16h1v1h-1zM9 16h2v1h-2zM13 16h1v1h-1zM15 16h1v1h-1zM17 16h1v1h-1zM20 16h2v1h-2zM23 16h4v1h-4zM28 16h1v1h-1zM31 16h1v1h-1zM34 16h3v1h-3zM39 16h3v1h-3zM43 16h4v1h-4zM51 16h2v1h-2zM54 16h2v1h-2zM0 17h1v1h-1zM2 17h2v1h-2zM5 17h3v1h-3zM10 17h2v1h-2zM13 17h2v1h-2zM16 17h3v1h-3zM23 17h3v1h-3zM28 17h2v1h-2zM31 17h3v1h-3zM37 17h1v1h-1zM39 17h3v1h-3zM43 17h5v1h-5zM49 17h1v1h-1zM52 17h3v1h-3zM2 18h8v1h-8zM13 18h2v1h-2zM17 18h4v1h-4zM22 18h2v1h-2zM26 18h1v1h-1zM28 18h5v1h-5zM35 18h2v1h-2zM38 18h7v1h-7zM47 18h1v1h-1zM49 18h3v1h-3zM53 18h1v1h-1zM2 19h1v1h-1zM5 19h1v1h-1zM7 19h2v1h-2zM11 19h14v1h-14zM26 19h2v1h-2zM31 19h2v1h-2zM34 19h1v1h-1zM36 19h1v1h-1zM38 19h1v1h-1zM41 19h1v1h-1zM43 19h1v1h-1zM45 19h3v1h-3zM49 19h1v1h-1zM53 19h1v1h-1zM0 20h1v1h-1zM3 20h1v1h-1zM6 20h1v1h-1zM8 20h1v1h-1zM10 20h3v1h-3zM14 20h7v1h-7zM26 20h1v1h-1zM28 20h1v1h-1zM30 20h2v1h-2zM34 20h1v1h-1zM36 20h1v1h-1zM40 20h4v1h-4zM45 20h1v1h-1zM48 20h2v1h-2zM52 20h1v1h-1zM54 20h2v1h-2zM1 21h1v1h-1zM3 21h1v1h-1zM5 21h1v1h-1zM7 21h2v1h-2zM12 21h3v1h-3zM17 21h3v1h-3zM23 21h6v1h-6zM32 21h2v1h-2zM37 21h2v1h-2zM42 21h3v1h-3zM49 21h2v1h-2zM54 21h1v1h-1zM56 21h1v1h-1zM0 22h1v1h-1zM7 22h2v1h-2zM10 22h1v1h-1zM12 22h2v1h-2zM15 22h1v1h-1zM17 22h2v1h-2zM20 22h3v1h-3zM26 22h9v1h-9zM36 22h2v1h-2zM43 22h10v1h-10zM54 22h3v1h-3zM2 23h3v1h-3zM6 23h1v1h-1zM8 23h1v1h-1zM10 23h1v1h-1zM13 23h6v1h-6zM21 23h1v1h-1zM23 23h1v1h-1zM25 23h3v1h-3zM29 23h3v1h-3zM36 23h2v1h-2zM39 23h1v1h-1zM43 23h1v1h-1zM46 23h4v1h-4zM53 23h1v1h-1zM55 23h1v1h-1zM0 24h4v1h-4zM5 24h2v1h-2zM8 24h1v1h-1zM12 24h1v1h-1zM16 24h3v1h-3zM20 24h5v1h-5zM26 24h1v1h-1zM29 24h1v1h-1zM31 24h3v1h-3zM36 24h5v1h-5zM44 24h1v1h-1zM46 24h1v1h-1zM48 24h2v1h-2zM51 24h3v1h-3zM56 24h1v1h-1zM4 25h1v1h-1zM6 25h1v1h-1zM8 25h1v1h-1zM10 25h2v1h-2zM13 25h2v1h-2zM17 25h1v1h-1zM21 25h1v1h-1zM25 25h1v1h-1zM27 25h1v1h-1zM29 25h3v1h-3zM34 25h1v1h-1zM37 25h2v1h-2zM40 25h4v1h-4zM45 25h4v1h-4zM53 25h2v1h-2zM0 26h1v1h-1zM2 26h1v1h-1zM5 26h2v1h-2zM8 26h3v1h-3zM12 26h4v1h-4zM17 26h1v1h-1zM21 26h2v1h-2zM25 26h3v1h-3zM29 26h2v1h-2zM33 26h1v1h-1zM37 26h1v1h-1zM39 26h3v1h-3zM43 26h4v1h-4zM48 26h1v1h-1zM51 26h1v1h-1zM53 26h1v1h-1zM55 26h2v1h-2zM0 27h2v1h-2zM3 27h1v1h-1zM5 27h7v1h-7zM13 27h2v1h-2zM16 27h1v1h-1zM18 27h5v1h-5zM26 27h1v1h-1zM28 27h3v1h-3zM36 27h3v1h-3zM42 27h2v1h-2zM46 27h1v1h-1zM50 27h2v1h-2zM53 27h2v1h-2zM56 27h1v1h-1zM0 28h1v1h-1zM5 28h2v1h-2zM8 28h1v1h-1zM10 28h1v1h-1zM13 28h3v1h-3zM19 28h3v1h-3zM24 28h1v1h-1zM28 28h1v1h-1zM31 28h1v1h-1zM33 28h1v1h-1zM35 28h5v1h-5zM41 28h2v1h-2zM47 28h4v1h-4zM54 28h1v1h-1zM56 28h1v1h-1zM0 29h1v1h-1zM2 29h3v1h-3zM6 29h2v1h-2zM10 29h8v1h-8zM22 29h7v1h-7zM31 29h3v1h-3zM36 29h13v1h-13zM50 29h7v1h-7zM2 30h2v1h-2zM5 30h1v1h-1zM8 30h1v1h-1zM10 30h4v1h-4zM15 30h1v1h-1zM18 30h2v1h-2zM21 30h1v1h-1zM24 30h10v1h-10zM38 30h3v1h-3zM45 30h2v1h-2zM49 30h1v1h-1zM53 30h4v1h-4zM0 31h4v1h-4zM7 31h2v1h-2zM10 31h2v1h-2zM13 31h1v1h-1zM15 31h1v1h-1zM17 31h3v1h-3zM24 31h3v1h-3zM29 31h2v1h-2zM32 31h1v1h-1zM38 31h2v1h-2zM41 31h2v1h-2zM45 31h2v1h-2zM48 31h4v1h-4zM54 31h3v1h-3zM0 32h1v1h-1zM2 32h4v1h-4zM7 32h1v1h-1zM9 32h2v1h-2zM13 32h6v1h-6zM20 32h6v1h-6zM29 32h1v1h-1zM31 32h2v1h-2zM37 32h10v1h-10zM53 32h4v1h-4zM2 33h4v1h-4zM7 33h3v1h-3zM11 33h1v1h-1zM13 33h2v1h-2zM16 33h2v1h-2zM23 33h4v1h-4zM29 33h2v1h-2zM33 33h1v1h-1zM35 33h1v1h-1zM37 33h2v1h-2zM44 33h3v1h-3zM49 33h1v1h-1zM51 33h1v1h-1zM54 33h1v1h-1zM0 34h2v1h-2zM3 34h3v1h-3zM10 34h4v1h-4zM15 34h1v1h-1zM17 34h1v1h-1zM20 34h2v1h-2zM23 34h2v1h-2zM27 34h6v1h-6zM37 34h3v1h-3zM41 34h2v1h-2zM46 34h1v1h-1zM48 34h1v1h-1zM50 34h1v1h-1zM52 34h5v1h-5zM1 35h2v1h-2zM4 35h2v1h-2zM8 35h1v1h-1zM10 35h1v1h-1zM12 35h1v1h-1zM14 35h1v1h-1zM16 35h1v1h-1zM18 35h1v1h-1zM20 35h3v1h-3zM24 35h5v1h-5zM31 35h3v1h-3zM36 35h1v1h-1zM38 35h2v1h-2zM41 35h10v1h-10zM52 35h1v1h-1zM54 35h1v1h-1zM56 35h1v1h-1zM0 36h6v1h-6zM8 36h1v1h-1zM11 36h1v1h-1zM13 36h7v1h-7zM21 36h1v1h-1zM25 36h1v1h-1zM27 36h2v1h-2zM31 36h1v1h-1zM34 36h3v1h-3zM39 36h2v1h-2zM46 36h2v1h-2zM49 36h1v1h-1zM51 36h2v1h-2zM54 36h3v1h-3zM0 37h1v1h-1zM4 37h3v1h-3zM11 37h2v1h-2zM14 37h1v1h-1zM16 37h1v1h-1zM18 37h3v1h-3zM23 37h7v1h-7zM31 37h2v1h-2zM34 37h3v1h-3zM38 37h4v1h-4zM44 37h1v1h-1zM46 37h1v1h-1zM48 37h1v1h-1zM50 37h1v1h-1zM54 37h3v1h-3zM2 38h1v1h-1zM5 38h3v1h-3zM9 38h7v1h-7zM17 38h1v1h-1zM20 38h1v1h-1zM23 38h2v1h-2zM26 38h1v1h-1zM33 38h2v1h-2zM36 38h1v1h-1zM38 38h1v1h-1zM40 38h1v1h-1zM42 38h8v1h-8zM52 38h2v1h-2zM55 38h2v1h-2zM3 39h2v1h-2zM6 39h2v1h-2zM9 39h2v1h-2zM13 39h3v1h-3zM17 39h1v1h-1zM19 39h2v1h-2zM22 39h2v1h-2zM27 39h2v1h-2zM30 39h1v1h-1zM32 39h2v1h-2zM35 39h1v1h-1zM37 39h4v1h-4zM42 39h1v1h-1zM44 39h2v1h-2zM49 39h1v1h-1zM52 39h1v1h-1zM54 39h3v1h-3zM3 40h1v1h-1zM6 40h3v1h-3zM12 40h1v1h-1zM15 40h2v1h-2zM18 40h1v1h-1zM21 40h4v1h-4zM28 40h1v1h-1zM34 40h1v1h-1zM36 40h1v1h-1zM39 40h6v1h-6zM46 40h2v1h-2zM49 40h2v1h-2zM53 40h2v1h-2zM56 40h1v1h-1zM1 41h1v1h-1zM3 41h1v1h-1zM5 41h3v1h-3zM9 41h1v1h-1zM11 41h1v1h-1zM14 41h1v1h-1zM16 41h2v1h-2zM21 41h1v1h-1zM23 41h1v1h-1zM25 41h3v1h-3zM30 41h2v1h-2zM35 41h2v1h-2zM43 41h2v1h-2zM46 41h1v1h-1zM48 41h1v1h-1zM53 41h4v1h-4zM1 42h2v1h-2zM6 42h3v1h-3zM12 42h3v1h-3zM17 42h2v1h-2zM20 42h1v1h-1zM22 42h1v1h-1zM24 42h1v1h-1zM29 42h1v1h-1zM33 42h1v1h-1zM35 42h1v1h-1zM37 42h1v1h-1zM39 42h1v1h-1zM41 42h1v1h-1zM44 42h1v1h-1zM46 42h2v1h-2zM49 42h2v1h-2zM53 42h1v1h-1zM55 42h2v1h-2zM0 43h5v1h-5zM8 43h1v1h-1zM11 43h1v1h-1zM16 43h1v1h-1zM19 43h4v1h-4zM25 43h7v1h-7zM35 43h1v1h-1zM37 43h3v1h-3zM42 43h2v1h-2zM45 43h1v1h-1zM47 43h5v1h-5zM53 43h2v1h-2zM56 43h1v1h-1zM0 44h4v1h-4zM6 44h5v1h-5zM13 44h5v1h-5zM19 44h2v1h-2zM25 44h1v1h-1zM27 44h3v1h-3zM32 44h4v1h-4zM37 44h7v1h-7zM45 44h6v1h-6zM52 44h5v1h-5zM0 45h1v1h-1zM6 45h1v1h-1zM8 45h6v1h-6zM17 45h1v1h-1zM19 45h7v1h-7zM28 45h1v1h-1zM31 45h1v1h-1zM33 45h2v1h-2zM42 45h5v1h-5zM50 45h1v1h-1zM52 45h1v1h-1zM55 45h1v1h-1zM0 46h1v1h-1zM4 46h2v1h-2zM7 46h1v1h-1zM13 46h2v1h-2zM17 46h1v1h-1zM21 46h2v1h-2zM26 46h2v1h-2zM29 46h4v1h-4zM35 46h1v1h-1zM37 46h2v1h-2zM41 46h1v1h-1zM43 46h1v1h-1zM49 46h5v1h-5zM56 46h1v1h-1zM1 47h1v1h-1zM3 47h1v1h-1zM6 47h3v1h-3zM10 47h5v1h-5zM16 47h1v1h-1zM18 47h1v1h-1zM22 47h1v1h-1zM26 47h4v1h-4zM31 47h1v1h-1zM34 47h2v1h-2zM37 47h4v1h-4zM43 47h2v1h-2zM47 47h4v1h-4zM53 47h2v1h-2zM56 47h1v1h-1zM1 48h1v1h-1zM4 48h2v1h-2zM7 48h6v1h-6zM15 48h3v1h-3zM19 48h1v1h-1zM21 48h1v1h-1zM25 48h2v1h-2zM28 48h3v1h-3zM33 48h4v1h-4zM39 48h1v1h-1zM44 48h1v1h-1zM47 48h6v1h-6zM55 48h1v1h-1zM9 49h1v1h-1zM11 49h1v1h-1zM15 49h1v1h-1zM19 49h6v1h-6zM26 49h3v1h-3zM31 49h5v1h-5zM37 49h1v1h-1zM39 49h1v1h-1zM42 49h1v1h-1zM47 49h2v1h-2zM52 49h1v1h-1zM55 49h1v1h-1zM0 50h7v1h-7zM12 50h3v1h-3zM17 50h1v1h-1zM20 50h1v1h-1zM25 50h1v1h-1zM28 50h1v1h-1zM30 50h4v1h-4zM38 50h1v1h-1zM42 50h2v1h-2zM47 50h2v1h-2zM50 50h1v1h-1zM52 50h2v1h-2zM56 50h1v1h-1zM0 51h1v1h-1zM6 51h1v1h-1zM9 51h2v1h-2zM12 51h1v1h-1zM18 51h1v1h-1zM22 51h1v1h-1zM24 51h2v1h-2zM28 51h1v1h-1zM32 51h2v1h-2zM35 51h2v1h-2zM38 51h3v1h-3zM44 51h2v1h-2zM47 51h2v1h-2zM52 51h2v1h-2zM55 51h2v1h-2zM0 52h1v1h-1zM2 52h3v1h-3zM6 52h1v1h-1zM9 52h1v1h-1zM11 52h2v1h-2zM14 52h1v1h-1zM16 52h6v1h-6zM23 52h2v1h-2zM28 52h1v1h-1zM30 52h1v1h-1zM32 52h4v1h-4zM40 52h2v1h-2zM43 52h1v1h-1zM46 52h7v1h-7zM56 52h1v1h-1zM0 53h1v1h-1zM2 53h3v1h-3zM6 53h1v1h-1zM9 53h2v1h-2zM12 53h1v1h-1zM17 53h3v1h-3zM22 53h5v1h-5zM29 53h1v1h-1zM32 53h1v1h-1zM34 53h1v1h-1zM36 53h2v1h-2zM40 53h1v1h-1zM42 53h2v1h-2zM48 53h5v1h-5zM54 53h1v1h-1zM56 53h1v1h-1zM0 54h1v1h-1zM2 54h3v1h-3zM6 54h1v1h-1zM8 54h2v1h-2zM11 54h3v1h-3zM17 54h2v1h-2zM20 54h1v1h-1zM23 54h5v1h-5zM30 54h5v1h-5zM36 54h5v1h-5zM45 54h1v1h-1zM47 54h4v1h-4zM54 54h2v1h-2zM0 55h1v1h-1zM6 55h1v1h-1zM8 55h1v1h-1zM11 55h1v1h-1zM14 55h2v1h-2zM18 55h1v1h-1zM20 55h3v1h-3zM26 55h14v1h-14zM41 55h1v1h-1zM45 55h1v1h-1zM47 55h5v1h-5zM55 55h1v1h-1zM0 56h7v1h-7zM8 56h1v1h-1zM11 56h3v1h-3zM15 56h1v1h-1zM17 56h1v1h-1zM19 56h2v1h-2zM22 56h6v1h-6zM30 56h2v1h-2zM33 56h1v1h-1zM38 56h1v1h-1zM40 56h1v1h-1zM43 56h2v1h-2zM46 56h2v1h-2zM49 56h3v1h-3zM53 56h1v1h-1zM55 56h2v1h-2z"/></svg>
<div class="abs fbtn" style="top:367px">Android下载</div>
<div class="abs" style="left:12px;top:414px;width:107px;height:107px;background:#fff"></div>
<svg class="abs" style="left:18px;top:420px" width="94" height="94" viewBox="0 0 41 41" shape-rendering="crispEdges"><path fill="#000" d="M0 0h7v1h-7zM11 0h3v1h-3zM16 0h3v1h-3zM21 0h1v1h-1zM23 0h1v1h-1zM25 0h2v1h-2zM28 0h2v1h-2zM32 0h1v1h-1zM34 0h7v1h-7zM0 1h1v1h-1zM6 1h1v1h-1zM9 1h2v1h-2zM12 1h3v1h-3zM16 1h1v1h-1zM18 1h1v1h-1zM21 1h1v1h-1zM23 1h1v1h-1zM25 1h3v1h-3zM29 1h1v1h-1zM34 1h1v1h-1zM40 1h1v1h-1zM0 2h1v1h-1zM2 2h3v1h-3zM6 2h1v1h-1zM9 2h5v1h-5zM16 2h2v1h-2zM19 2h3v1h-3zM24 2h3v1h-3zM28 2h2v1h-2zM31 2h1v1h-1zM34 2h1v1h-1zM36 2h3v1h-3zM40 2h1v1h-1zM0 3h1v1h-1zM2 3h3v1h-3zM6 3h1v1h-1zM8 3h4v1h-4zM15 3h4v1h-4zM21 3h1v1h-1zM27 3h1v1h-1zM29 3h2v1h-2zM34 3h1v1h-1zM36 3h3v1h-3zM40 3h1v1h-1zM0 4h1v1h-1zM2 4h3v1h-3zM6 4h1v1h-1zM8 4h1v1h-1zM14 4h3v1h-3zM19 4h1v1h-1zM23 4h1v1h-1zM27 4h1v1h-1zM32 4h1v1h-1zM34 4h1v1h-1zM36 4h3v1h-3zM40 4h1v1h-1zM0 5h1v1h-1zM6 5h1v1h-1zM8 5h1v1h-1zM11 5h1v1h-1zM13 5h5v1h-5zM19 5h2v1h-2zM22 5h1v1h-1zM24 5h1v1h-1zM28 5h1v1h-1zM31 5h2v1h-2zM34 5h1v1h-1zM40 5h1v1h-1zM0 6h7v1h-7zM8 6h2v1h-2zM11 6h1v1h-1zM15 6h1v1h-1zM17 6h3v1h-3zM21 6h4v1h-4zM26 6h2v1h-2zM30 6h3v1h-3zM34 6h7v1h-7zM8 7h5v1h-5zM15 7h3v1h-3zM21 7h1v1h-1zM23 7h1v1h-1zM27 7h1v1h-1zM29 7h2v1h-2zM32 7h1v1h-1zM1 8h2v1h-2zM4 8h3v1h-3zM9 8h2v1h-2zM14 8h1v1h-1zM19 8h1v1h-1zM21 8h1v1h-1zM25 8h2v1h-2zM28 8h1v1h-1zM30 8h2v1h-2zM33 8h5v1h-5zM0 9h3v1h-3zM4 9h1v1h-1zM6 9h2v1h-2zM9 9h1v1h-1zM11 9h1v1h-1zM15 9h1v1h-1zM17 9h1v1h-1zM19 9h4v1h-4zM24 9h1v1h-1zM27 9h1v1h-1zM29 9h2v1h-2zM32 9h1v1h-1zM34 9h2v1h-2zM37 9h1v1h-1zM39 9h2v1h-2zM2 10h2v1h-2zM7 10h1v1h-1zM9 10h3v1h-3zM13 10h3v1h-3zM19 10h1v1h-1zM21 10h1v1h-1zM25 10h5v1h-5zM31 10h1v1h-1zM33 10h2v1h-2zM37 10h4v1h-4zM0 11h3v1h-3zM4 11h8v1h-8zM13 11h1v1h-1zM17 11h1v1h-1zM19 11h1v1h-1zM21 11h1v1h-1zM24 11h6v1h-6zM31 11h4v1h-4zM37 11h2v1h-2zM1 12h1v1h-1zM3 12h2v1h-2zM6 12h2v1h-2zM10 12h4v1h-4zM15 12h1v1h-1zM17 12h10v1h-10zM28 12h7v1h-7zM39 12h2v1h-2zM0 13h2v1h-2zM3 13h1v1h-1zM7 13h2v1h-2zM10 13h4v1h-4zM16 13h6v1h-6zM23 13h2v1h-2zM26 13h7v1h-7zM39 13h1v1h-1zM4 14h1v1h-1zM6 14h5v1h-5zM12 14h2v1h-2zM16 14h4v1h-4zM23 14h5v1h-5zM31 14h3v1h-3zM35 14h1v1h-1zM38 14h2v1h-2zM0 15h3v1h-3zM5 15h1v1h-1zM8 15h1v1h-1zM10 15h2v1h-2zM13 15h1v1h-1zM15 15h1v1h-1zM17 15h4v1h-4zM22 15h1v1h-1zM24 15h3v1h-3zM31 15h2v1h-2zM34 15h4v1h-4zM40 15h1v1h-1zM1 16h1v1h-1zM6 16h3v1h-3zM10 16h7v1h-7zM18 16h1v1h-1zM24 16h1v1h-1zM26 16h1v1h-1zM29 16h5v1h-5zM37 16h1v1h-1zM39 16h1v1h-1zM0 17h1v1h-1zM9 17h2v1h-2zM12 17h1v1h-1zM15 17h4v1h-4zM23 17h2v1h-2zM28 17h1v1h-1zM30 17h3v1h-3zM35 17h1v1h-1zM38 17h2v1h-2zM3 18h3v1h-3zM7 18h2v1h-2zM11 18h3v1h-3zM16 18h2v1h-2zM22 18h2v1h-2zM26 18h1v1h-1zM30 18h1v1h-1zM33 18h6v1h-6zM40 18h1v1h-1zM9 19h6v1h-6zM17 19h2v1h-2zM20 19h2v1h-2zM23 19h1v1h-1zM25 19h1v1h-1zM28 19h1v1h-1zM31 19h4v1h-4zM37 19h3v1h-3zM2 20h2v1h-2zM5 20h4v1h-4zM10 20h4v1h-4zM16 20h1v1h-1zM18 20h2v1h-2zM21 20h1v1h-1zM23 20h8v1h-8zM32 20h4v1h-4zM38 20h3v1h-3zM1 21h1v1h-1zM6 21h2v1h-2zM9 21h1v1h-1zM13 21h1v1h-1zM17 21h1v1h-1zM19 21h1v1h-1zM22 21h5v1h-5zM28 21h5v1h-5zM35 21h2v1h-2zM40 21h1v1h-1zM0 22h1v1h-1zM3 22h4v1h-4zM8 22h1v1h-1zM10 22h2v1h-2zM14 22h2v1h-2zM17 22h3v1h-3zM22 22h1v1h-1zM24 22h1v1h-1zM27 22h2v1h-2zM30 22h1v1h-1zM32 22h2v1h-2zM36 22h5v1h-5zM0 23h3v1h-3zM5 23h2v1h-2zM11 23h2v1h-2zM14 23h2v1h-2zM17 23h2v1h-2zM20 23h1v1h-1zM23 23h3v1h-3zM27 23h6v1h-6zM34 23h2v1h-2zM38 23h1v1h-1zM0 24h1v1h-1zM2 24h2v1h-2zM5 24h1v1h-1zM7 24h3v1h-3zM12 24h2v1h-2zM15 24h1v1h-1zM17 24h1v1h-1zM19 24h1v1h-1zM23 24h1v1h-1zM25 24h2v1h-2zM28 24h3v1h-3zM34 24h1v1h-1zM37 24h1v1h-1zM39 24h2v1h-2zM0 25h1v1h-1zM2 25h1v1h-1zM4 25h4v1h-4zM9 25h5v1h-5zM16 25h3v1h-3zM20 25h1v1h-1zM23 25h4v1h-4zM30 25h1v1h-1zM33 25h4v1h-4zM38 25h1v1h-1zM1 26h1v1h-1zM3 26h2v1h-2zM8 26h1v1h-1zM10 26h1v1h-1zM13 26h5v1h-5zM19 26h1v1h-1zM21 26h3v1h-3zM27 26h5v1h-5zM33 26h3v1h-3zM38 26h2v1h-2zM0 27h3v1h-3zM5 27h2v1h-2zM9 27h3v1h-3zM13 27h1v1h-1zM16 27h1v1h-1zM18 27h3v1h-3zM22 27h2v1h-2zM26 27h2v1h-2zM29 27h2v1h-2zM33 27h2v1h-2zM37 27h1v1h-1zM39 27h2v1h-2zM0 28h2v1h-2zM4 28h1v1h-1zM6 28h1v1h-1zM8 28h3v1h-3zM12 28h1v1h-1zM14 28h1v1h-1zM17 28h1v1h-1zM20 28h2v1h-2zM23 28h3v1h-3zM27 28h1v1h-1zM31 28h1v1h-1zM33 28h1v1h-1zM36 28h1v1h-1zM39 28h1v1h-1zM0 29h1v1h-1zM4 29h3v1h-3zM10 29h5v1h-5zM17 29h1v1h-1zM20 29h1v1h-1zM22 29h3v1h-3zM28 29h3v1h-3zM32 29h1v1h-1zM35 29h1v1h-1zM37 29h2v1h-2zM40 29h1v1h-1zM0 30h2v1h-2zM3 30h3v1h-3zM7 30h3v1h-3zM18 30h1v1h-1zM21 30h10v1h-10zM32 30h2v1h-2zM37 30h4v1h-4zM0 31h2v1h-2zM10 31h1v1h-1zM15 31h4v1h-4zM21 31h2v1h-2zM24 31h2v1h-2zM27 31h8v1h-8zM38 31h1v1h-1zM40 31h1v1h-1zM0 32h3v1h-3zM5 32h1v1h-1zM7 32h1v1h-1zM10 32h4v1h-4zM15 32h2v1h-2zM18 32h3v1h-3zM23 32h1v1h-1zM25 32h2v1h-2zM29 32h1v1h-1zM31 32h10v1h-10zM8 33h1v1h-1zM10 33h3v1h-3zM14 33h3v1h-3zM18 33h2v1h-2zM21 33h1v1h-1zM23 33h1v1h-1zM25 33h4v1h-4zM30 33h3v1h-3zM36 33h1v1h-1zM38 33h3v1h-3zM0 34h7v1h-7zM9 34h2v1h-2zM13 34h2v1h-2zM16 34h1v1h-1zM18 34h4v1h-4zM23 34h1v1h-1zM28 34h3v1h-3zM32 34h1v1h-1zM34 34h1v1h-1zM36 34h1v1h-1zM38 34h1v1h-1zM0 35h1v1h-1zM6 35h1v1h-1zM8 35h2v1h-2zM11 35h1v1h-1zM13 35h3v1h-3zM18 35h2v1h-2zM21 35h1v1h-1zM24 35h2v1h-2zM27 35h1v1h-1zM29 35h4v1h-4zM36 35h5v1h-5zM0 36h1v1h-1zM2 36h3v1h-3zM6 36h1v1h-1zM11 36h5v1h-5zM17 36h3v1h-3zM26 36h1v1h-1zM28 36h10v1h-10zM0 37h1v1h-1zM2 37h3v1h-3zM6 37h1v1h-1zM8 37h1v1h-1zM10 37h5v1h-5zM17 37h1v1h-1zM19 37h1v1h-1zM21 37h1v1h-1zM25 37h1v1h-1zM29 37h3v1h-3zM33 37h1v1h-1zM35 37h3v1h-3zM39 37h1v1h-1zM0 38h1v1h-1zM2 38h3v1h-3zM6 38h1v1h-1zM8 38h1v1h-1zM10 38h2v1h-2zM13 38h7v1h-7zM21 38h2v1h-2zM25 38h3v1h-3zM29 38h5v1h-5zM36 38h2v1h-2zM0 39h1v1h-1zM6 39h1v1h-1zM13 39h1v1h-1zM16 39h1v1h-1zM18 39h3v1h-3zM23 39h1v1h-1zM25 39h1v1h-1zM28 39h1v1h-1zM31 39h1v1h-1zM34 39h1v1h-1zM37 39h2v1h-2zM0 40h7v1h-7zM8 40h1v1h-1zM10 40h1v1h-1zM16 40h2v1h-2zM20 40h1v1h-1zM22 40h4v1h-4zM27 40h2v1h-2zM30 40h1v1h-1zM34 40h7v1h-7z"/></svg>

</body>
</html>
